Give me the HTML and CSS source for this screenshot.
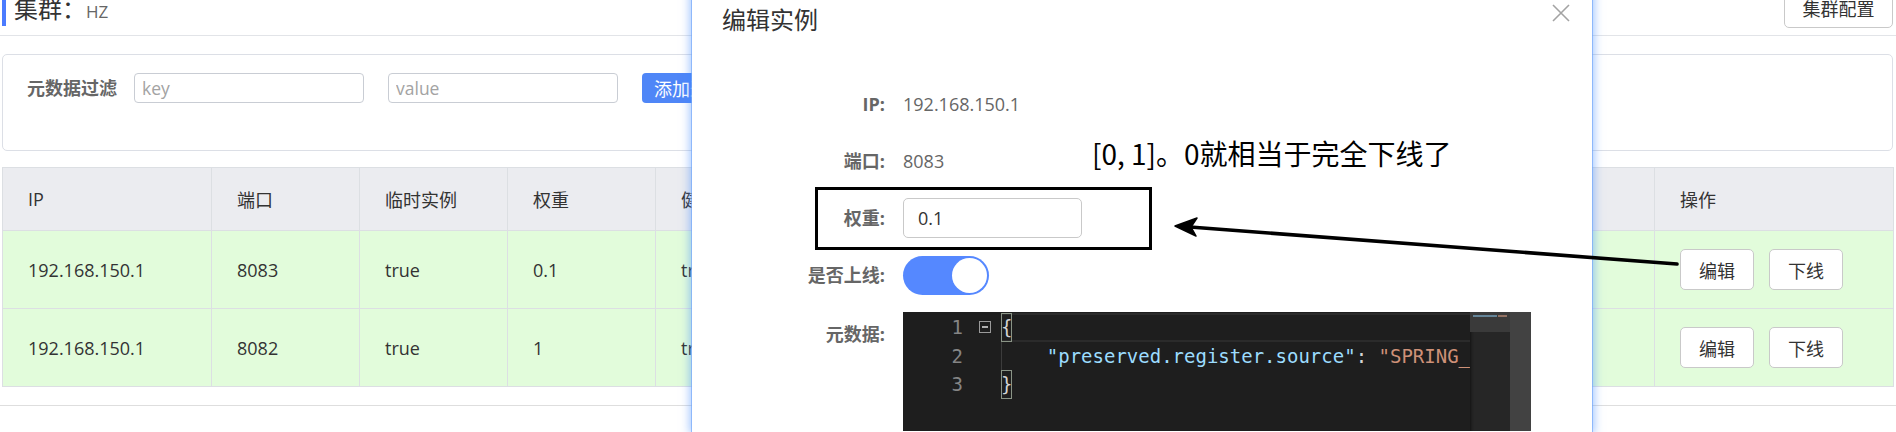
FILE: index.html
```html
<!DOCTYPE html>
<html lang="zh-CN">
<head>
<meta charset="utf-8">
<title>编辑实例</title>
<link rel="stylesheet" href="styles.css">
</head>
<body>
<div class="page">
  <div class="page-head">
    <div class="page-title"><span class="t-main">集群：</span><span class="t-sub">HZ</span></div>
    <button class="btn btn-cfg">集群配置</button>
  </div>

  <div class="filter-card">
    <span class="filter-label">元数据过滤</span>
    <input class="f-input" placeholder="key">
    <input class="f-input" placeholder="value">
    <button class="btn-primary">添加过滤</button>
  </div>

  <table class="inst-table">
    <colgroup>
      <col class="c-ip"><col class="c-std"><col class="c-std"><col class="c-std"><col class="c-std"><col class="c-meta"><col class="c-op">
    </colgroup>
    <thead>
      <tr><th>IP</th><th>端口</th><th>临时实例</th><th>权重</th><th>健康状态</th><th>元数据</th><th>操作</th></tr>
    </thead>
    <tbody>
      <tr>
        <td>192.168.150.1</td><td>8083</td><td>true</td><td>0.1</td><td>true</td>
        <td>preserved.register.source=SPRING_CLOUD</td>
        <td><div class="ops"><button class="btn btn-op">编辑</button><button class="btn btn-op">下线</button></div></td>
      </tr>
      <tr>
        <td>192.168.150.1</td><td>8082</td><td>true</td><td>1</td><td>true</td>
        <td>preserved.register.source=SPRING_CLOUD</td>
        <td><div class="ops"><button class="btn btn-op">编辑</button><button class="btn btn-op">下线</button></div></td>
      </tr>
    </tbody>
  </table>
  <div class="pager"></div>
</div>

<div class="modal">
  <h2 class="modal-title">编辑实例</h2>
  <svg class="modal-close" viewBox="0 0 18 18" width="18" height="18"><path d="M1 1L17 17M17 1L1 17" stroke="#a3a3a3" stroke-width="1.6" fill="none"/></svg>
  <div class="form">
    <div class="f-label">IP:</div>
    <div class="f-value">192.168.150.1</div>

    <div class="f-label">端口:</div>
    <div class="f-value">8083</div>

    <div class="f-label">权重:</div>
    <div class="f-ctrl"><input class="w-input" value="0.1"></div>

    <div class="f-label">是否上线:</div>
    <div class="f-ctrl"><span class="switch"></span></div>

    <div class="f-label f-label-top">元数据:</div>
    <div class="f-ctrl f-ctrl-top">
      <div class="editor">
        <div class="gutter">
          <div class="g-line"><span class="g-num">1</span><span class="g-fold"><span class="g-minus"></span></span></div>
          <div class="g-line"><span class="g-num">2</span></div>
          <div class="g-line"><span class="g-num">3</span></div>
        </div>
        <div class="code">
          <div class="c-line active"><span class="br">{</span></div>
          <div class="c-line guide"><span class="p">    </span><span class="k">"preserved.register.source"</span><span class="p">: </span><span class="s">"SPRING_CLOUD"</span></div>
          <div class="c-line"><span class="br">}</span></div>
        </div>
        <div class="minimap"><div class="mm-slider"><div class="mm-text"></div></div></div>
        <div class="scrollbar"></div>
      </div>
    </div>
  </div>
</div>

<div class="note-box"></div>
<div class="note-text">[0, 1]。0就相当于完全下线了</div>
<svg class="note-arrow" width="1896" height="432" viewBox="0 0 1896 432">
  <line x1="1677" y1="264" x2="1190" y2="227" stroke="#000" stroke-width="3.6" stroke-linecap="round"/>
  <polygon points="1175,226 1197,218 1191,227 1196,236" fill="#000" stroke="#000" stroke-width="1.5" stroke-linejoin="round"/>
</svg>
</body>
</html>
```

FILE: styles.css
```css
* { box-sizing: border-box; }
html, body { margin: 0; padding: 0; }
body {
  width: 1896px;
  height: 432px;
  overflow: hidden;
  position: relative;
  background: #fff;
  font-family: "Open Sans", "Noto Sans CJK SC", sans-serif;
  font-size: 18px;
  color: #333;
}

.page { padding: 0 3px 0 2px; }

.page-head {
  height: 36px;
  margin: 0 -3px 0 -2px;
  padding: 0 3px 0 2px;
  border-bottom: 1px solid #e2e4e8;
  display: flex;
  justify-content: space-between;
  align-items: flex-start;
}
.page-title {
  margin-top: -6px;
  border-left: 4px solid #4b7bff;
  padding-left: 8px;
  line-height: 28px;
  display: flex;
  align-items: baseline;
}
.t-main { font-family: "Noto Sans CJK SC", sans-serif; font-size: 24px; color: #333; }
.t-sub { font-size: 17px; color: #666; }

.btn {
  background: #fff;
  border: 1px solid #c9c9c9;
  border-radius: 5px;
  font-family: "Open Sans", "Noto Sans CJK SC", sans-serif;
  font-size: 18px;
  color: #333;
  padding: 0;
}
.btn-cfg { margin-top: -12px; height: 40px; width: 109px; }

.filter-card {
  margin-top: 18px;
  height: 97px;
  border: 1px solid #dcdfe6;
  border-radius: 5px;
  display: flex;
  align-items: flex-start;
  padding: 18px 0 0 24px;
}
.filter-label {
  font-weight: bold;
  color: #666;
  line-height: 30px;
  width: 91px;
  margin-right: 16px;
  white-space: nowrap;
}
.f-input {
  width: 230px;
  height: 30px;
  border: 1px solid #c9cdd4;
  border-radius: 4px;
  padding: 0 7px;
  margin-right: 24px;
  font-family: "Open Sans", sans-serif;
  font-size: 17.5px;
  color: #333;
}
.f-input::placeholder { color: #a3a3a3; }
.btn-primary {
  height: 30px;
  padding: 0 12px;
  background: #4f86f7;
  color: #fff;
  border: none;
  border-radius: 4px;
  font-family: "Noto Sans CJK SC", sans-serif;
  font-size: 18px;
}

.inst-table {
  margin-top: 16px;
  width: 1891px;
  border-collapse: collapse;
  table-layout: fixed;
}
.c-ip { width: 209px; }
.c-std { width: 148px; }
.c-meta { width: 851px; }
.c-op { width: 239px; }
.inst-table th, .inst-table td {
  border: 1px solid #dcdfe3;
  text-align: left;
  padding: 0 0 0 25px;
  white-space: nowrap;
  overflow: hidden;
  color: #333;
}
.inst-table th {
  height: 63px;
  background: #ebecf0;
  font-weight: normal;
}
.inst-table td {
  height: 78px;
  background: #e2fcdb;
}
.ops { display: flex; gap: 15px; }
.btn-op { width: 74px; height: 41px; font-family: "Noto Sans CJK SC", sans-serif; }

.pager { margin-top: 18px; border-top: 1px solid #dedede; margin-left: -2px; margin-right: -3px; }

.modal {
  position: absolute;
  left: 692px;
  top: -40px;
  width: 900px;
  height: 472px;
  background: #fff;
  box-shadow: 0 0 0 1px rgba(120, 170, 250, 0.7), 0 0 9px 2px rgba(60, 135, 255, 0.5);
  z-index: 10;
  padding: 43px 30px 0 30px;
}
.modal-title {
  margin: 0;
  font-family: "Noto Sans CJK SC", sans-serif;
  font-size: 24px;
  line-height: 32px;
  font-weight: normal;
  color: #333;
}
.modal-close { position: absolute; right: 22px; top: 44px; }

.form {
  margin-top: 49px;
  display: grid;
  grid-template-columns: 163px 1fr;
  column-gap: 18px;
  row-gap: 17px;
}
.f-label {
  text-align: right;
  font-weight: bold;
  color: #666;
  line-height: 40px;
  height: 40px;
}
.f-label-top { line-height: 44px; }
.f-value { line-height: 40px; color: #666; }
.f-ctrl { display: flex; align-items: center; min-height: 40px; }
.f-ctrl-top { align-items: flex-start; }
.w-input {
  width: 179px;
  height: 40px;
  border: 1px solid #c9c9c9;
  border-radius: 5px;
  padding: 0 14px;
  font-family: "Open Sans", sans-serif;
  font-size: 18px;
  color: #333;
}
.switch {
  display: block;
  width: 86px;
  height: 39px;
  border-radius: 20px;
  background: #5588ff;
  position: relative;
}
.switch::after {
  content: "";
  position: absolute;
  right: 2px;
  top: 2px;
  width: 35px;
  height: 35px;
  border-radius: 50%;
  background: #fff;
}

.editor {
  width: 628px;
  height: 119px;
  background: #1e1e1e;
  display: flex;
  font-family: "DejaVu Sans Mono", monospace;
  font-size: 19px;
  line-height: 28.5px;
}
.gutter { width: 98px; flex: none; padding-top: 1px; }
.g-line { display: flex; align-items: center; height: 28.5px; }
.g-num { width: 60px; text-align: right; color: #858585; }
.g-fold {
  width: 12px;
  height: 12px;
  margin-left: 16px;
  border: 1px solid #9a9a9a;
  display: flex;
  align-items: center;
  justify-content: center;
}
.g-minus { width: 6px; height: 2px; background: #b0b0b0; }
.code { flex: 1; min-width: 0; overflow: hidden; padding-top: 1px; }
.c-line { height: 28.5px; color: #d4d4d4; white-space: pre; }
.c-line.active { box-shadow: inset 0 2px #2b2b2b, inset 0 -2px #2b2b2b; }
.c-line.guide { box-shadow: inset 1px 0 #3c3c3c; }
.br {
  display: inline-block;
  height: 28.5px;
  vertical-align: top;
  box-shadow: inset 0 0 0 1px #8a9486;
}
.k { color: #9cdcfe; }
.p { color: #d4d4d4; }
.s { color: #ce9178; }
.minimap { width: 40px; flex: none; background: #262626; box-shadow: inset 3px 0 3px -2px #111; }
.mm-slider { height: 20px; background: #3a3a3a; padding: 3px 2px 0 3px; }
.mm-text { height: 2px; width: 34px; background: linear-gradient(90deg, #6f97b0 0 70%, transparent 70% 75%, #a77e6c 75% 100%); opacity: .8; }
.scrollbar { width: 21px; flex: none; background: #424242; }

.note-box {
  position: absolute;
  left: 815px;
  top: 187px;
  width: 337px;
  height: 63px;
  border: 3px solid #000;
  z-index: 20;
}
.note-text {
  position: absolute;
  left: 1092px;
  top: 136px;
  font-family: "Noto Sans CJK SC", sans-serif;
  font-size: 28px;
  line-height: 34px;
  color: #000;
  white-space: nowrap;
  z-index: 20;
}
.note-arrow { position: absolute; left: 0; top: 0; z-index: 20; pointer-events: none; }
```
